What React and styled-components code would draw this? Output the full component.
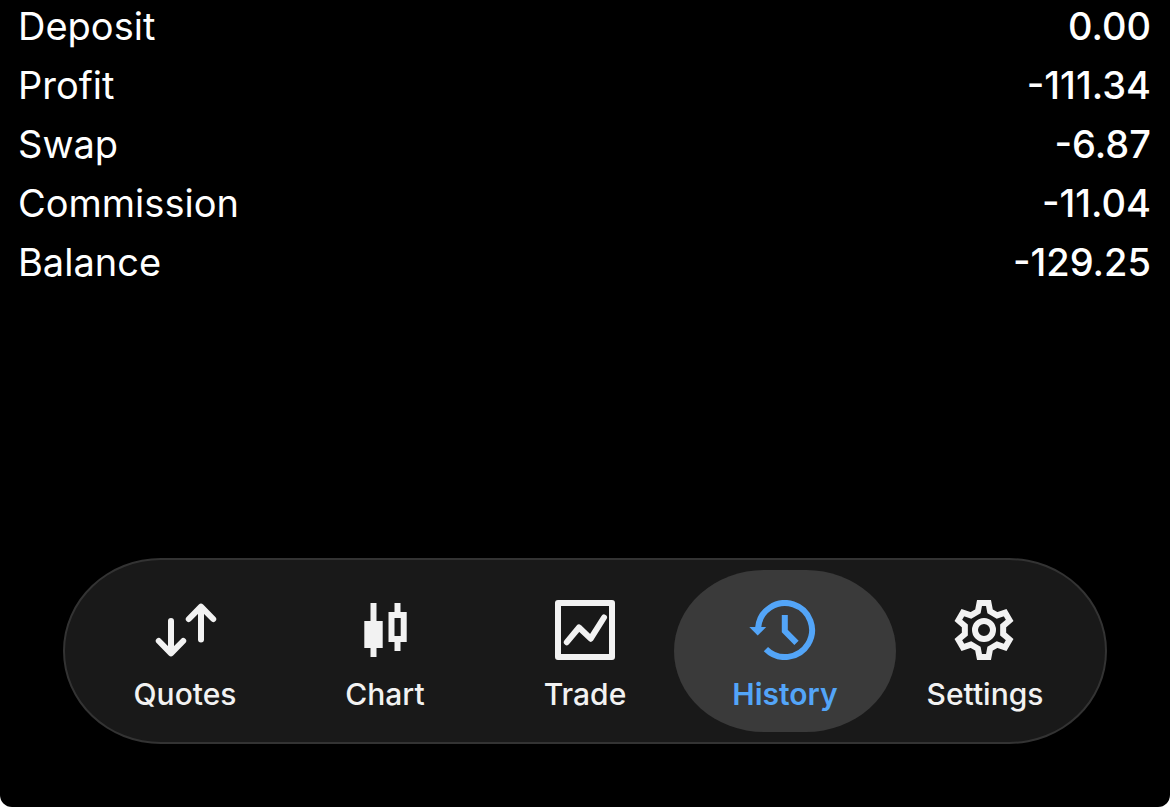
import React, { useState } from "react";
import styled, { createGlobalStyle } from "styled-components";

const GlobalStyle = createGlobalStyle`
  body {
    margin: 0;
    background: #ffffff;
  }
`;

const Screen = styled.main`
  box-sizing: border-box;
  min-height: 100vh;
  display: flex;
  flex-direction: column;
  justify-content: space-between;
  gap: 40px;
  padding: 3px 0 63px;
  border-radius: 0 0 12px 12px;
  background: #000000;
  color: #ffffff;
  font-family: Inter, "Liberation Sans", sans-serif;
`;

const Summary = styled.dl`
  display: flex;
  flex-direction: column;
  gap: 12px;
  margin: 0;
  padding: 0 19px 0 18px;
`;

const SummaryRow = styled.div`
  display: flex;
  justify-content: space-between;
  font-size: 38px;
  line-height: 47px;
`;

const SummaryLabel = styled.dt`
  font-weight: 400;
`;

const SummaryValue = styled.dd`
  margin: 0;
  font-weight: 500;
  font-optical-sizing: none;
`;

const TabBar = styled.nav`
  display: flex;
  margin: 0 63px;
  padding: 10px 20px;
  border: 2px solid #333333;
  border-radius: 98px / 93px;
  background: #191919;
`;

const Tab = styled.button`
  position: relative;
  z-index: 0;
  flex: 1 1 0;
  min-width: 0;
  display: flex;
  flex-direction: column;
  align-items: center;
  gap: 16px;
  padding: 30px 0 20px;
  border: none;
  background: none;
  color: ${({ $active }) => ($active ? "#53a5f8" : "#f2f2f2")};
  font-family: inherit;
  font-size: 30px;
  font-weight: ${({ $active }) => ($active ? 600 : 500)};
  font-optical-sizing: none;
  line-height: 36px;
  cursor: pointer;

  /* the highlight is a little wider than the tab itself */
  &::before {
    content: "";
    position: absolute;
    z-index: -1;
    inset: 0 -11px;
    border-radius: 90px / 81px;
    background: ${({ $active }) => ($active ? "#3a3a3a" : "transparent")};
  }
`;

const Icon = styled.svg`
  display: block;
  width: 80px;
  height: 60px;
  fill: none;
  stroke: currentColor;
  stroke-width: 6;
`;

const QuotesIcon = () => (
  <Icon viewBox="0 0 80 60" strokeLinecap="round" strokeLinejoin="round" aria-hidden="true">
    <path d="M26 21V53M13.8 41L26 53.4L38.2 41" />
    <path d="M56 39.5V7M43.8 19L56 6.6L68.2 19" />
  </Icon>
);

const ChartIcon = () => (
  <Icon viewBox="0 0 80 60" aria-hidden="true">
    <path d="M28.5 3V57M52.5 3V15M52.5 39V51" />
    <path d="M19.3 21H37.7V48H19.3Z" fill="currentColor" stroke="none" />
    <path d="M46.5 15H58.7V39H46.5Z" />
  </Icon>
);

const TradeIcon = () => (
  <Icon viewBox="0 0 80 60" strokeLinecap="round" strokeLinejoin="round" aria-hidden="true">
    <path d="M13 3H67V57H13Z" />
    <path d="M21.8 42.2L34 27.5L45.7 38.7L59 17.5" />
  </Icon>
);

const HistoryIcon = () => (
  <Icon viewBox="0 0 80 60" aria-hidden="true">
    <path d="M13.1 28A27 27 0 1 1 20.9 49.1" />
    <path d="M4.3 27H21.2L12.7 35.4Z" fill="currentColor" stroke="none" />
    <path d="M39.8 15V31L51.5 42.8" />
  </Icon>
);

const TOOTH = [[-6.1, -18.6], [-4.5, -27], [4.5, -27], [6.1, -18.6]];

const gearPoints = [0, 60, 120, 180, 240, 300]
  .flatMap((deg) => {
    const a = (deg * Math.PI) / 180;
    return TOOTH.map(([x, y]) => [
      (39 + x * Math.cos(a) - y * Math.sin(a)).toFixed(2),
      (30 + x * Math.sin(a) + y * Math.cos(a)).toFixed(2),
    ]);
  })
  .join(" ");

const SettingsIcon = () => (
  <Icon viewBox="0 0 80 60" aria-hidden="true">
    <polygon points={gearPoints} />
    <circle cx="39" cy="30" r="9" />
  </Icon>
);

const summary = [
  { label: "Deposit", value: "0.00" },
  { label: "Profit", value: "-111.34" },
  { label: "Swap", value: "-6.87" },
  { label: "Commission", value: "-11.04" },
  { label: "Balance", value: "-129.25" },
];

const tabs = [
  { name: "Quotes", Glyph: QuotesIcon },
  { name: "Chart", Glyph: ChartIcon },
  { name: "Trade", Glyph: TradeIcon },
  { name: "History", Glyph: HistoryIcon },
  { name: "Settings", Glyph: SettingsIcon },
];

const App = () => {
  const [current, setCurrent] = useState("History");

  return (
    <>
      <GlobalStyle />
      <Screen>
        <Summary>
          {summary.map(({ label, value }) => (
            <SummaryRow key={label}>
              <SummaryLabel>{label}</SummaryLabel>
              <SummaryValue>{value}</SummaryValue>
            </SummaryRow>
          ))}
        </Summary>
        <TabBar aria-label="Main">
          {tabs.map(({ name, Glyph }) => (
            <Tab
              key={name}
              type="button"
              $active={name === current}
              aria-current={name === current ? "page" : undefined}
              onClick={() => setCurrent(name)}
            >
              <Glyph />
              <span>{name}</span>
            </Tab>
          ))}
        </TabBar>
      </Screen>
    </>
  );
};

export default App;
